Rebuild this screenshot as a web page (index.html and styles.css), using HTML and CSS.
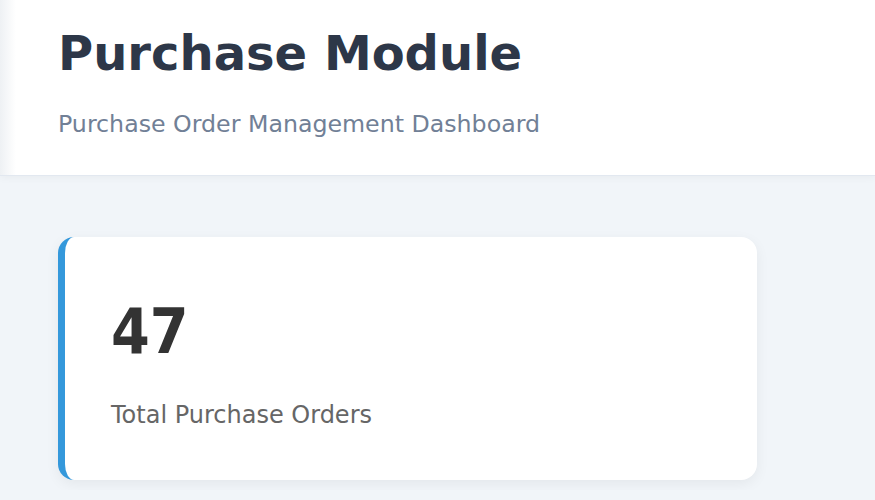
FILE: index.html
```html
<!DOCTYPE html>
<html lang="en">
<head>
    <meta charset="UTF-8">
    <meta name="viewport" content="width=device-width, initial-scale=1.0">
    <title>Purchase Module</title>
    <link rel="stylesheet" href="styles.css">
</head>
<body>
    <div class="header">
        <h1>Purchase Module</h1>
        <p>Purchase Order Management Dashboard</p>
    </div>

    <div class="content">
        <div class="stat-card">
            <div class="stat-number">47</div>
            <div class="stat-label">Total Purchase Orders</div>
        </div>
    </div>
</body>
</html>
```

FILE: styles.css
```css
body {
    margin: 0;
    background: #f1f5f9;
    font-family: "DejaVu Sans", Verdana, sans-serif;
}

.header {
    background: linear-gradient(to right, #eef1f4 0px, #ffffff 16px);
    border-bottom: 1px solid #e2e8f0;
    box-shadow: 0 2px 8px rgba(0, 0, 0, 0.04);
    padding: 25px 58px 37px;
}
.header h1 {
    margin: 0;
    font-size: 48px;
    font-weight: bold;
    color: #2d3748;
}
.header p {
    margin: 29px 0 0;
    font-size: 23.7px;
    color: #718096;
}

.content {
    padding: 61px 58px 10px;
}
.stat-card {
    background: white;
    width: 699px;
    box-sizing: border-box;
    border-left: 7px solid #3498db;
    border-radius: 16px;
    box-shadow: 0 4px 14px rgba(0, 0, 0, 0.06);
    padding: 64px 46px 51px;
}
.stat-number {
    font-family: "DejaVu Sans Condensed", "DejaVu Sans", sans-serif;
    font-size: 62px;
    font-weight: bold;
    color: #333;
    line-height: 1;
}
.stat-label {
    margin-top: 38px;
    font-size: 24px;
    color: #666;
}
```
